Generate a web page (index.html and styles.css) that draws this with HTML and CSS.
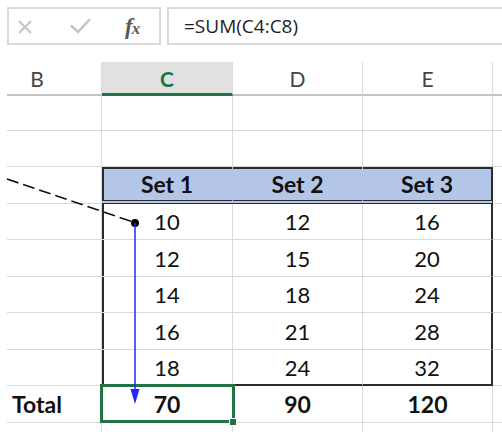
FILE: index.html
```html
<!DOCTYPE html>
<html>
<head>
<meta charset="utf-8">
<link rel="stylesheet" href="styles.css">
</head>
<body>
<div class="formula-bar">
  <div class="fx-box">
    <svg class="icon cancel" width="16" height="16" viewBox="0 0 16 16"><path d="M2 2 L14 14 M14 2 L2 14" stroke="#c3c3c3" stroke-width="2" fill="none"/></svg>
    <svg class="icon enter" width="21" height="16" viewBox="0 0 21 16"><path d="M1 7.5 L8 14 L20 1" stroke="#c3c3c3" stroke-width="2.4" fill="none"/></svg>
    <span class="fx">f<span class="x">x</span></span>
  </div>
  <div class="formula-input">=SUM(C4:C8)</div>
</div>

<div class="sheet">
  <div class="cell head b-head">B</div>
  <div class="cell head active">C</div>
  <div class="cell head">D</div>
  <div class="cell head">E</div>
  <div class="cell head edge"></div>

  <div class="cell"></div><div class="cell"></div><div class="cell"></div><div class="cell"></div><div class="cell edge"></div>
  <div class="cell"></div><div class="cell"></div><div class="cell"></div><div class="cell"></div><div class="cell edge"></div>

  <div class="cell"></div>
  <div class="cell th first">Set 1</div>
  <div class="cell th">Set 2</div>
  <div class="cell th last-col">Set 3</div>
  <div class="cell edge"></div>

  <div class="cell"></div><div class="cell td first">10</div><div class="cell td">12</div><div class="cell td last-col">16</div><div class="cell edge"></div>
  <div class="cell"></div><div class="cell td first">12</div><div class="cell td">15</div><div class="cell td last-col">20</div><div class="cell edge"></div>
  <div class="cell"></div><div class="cell td first">14</div><div class="cell td">18</div><div class="cell td last-col">24</div><div class="cell edge"></div>
  <div class="cell"></div><div class="cell td first">16</div><div class="cell td">21</div><div class="cell td last-col">28</div><div class="cell edge"></div>
  <div class="cell"></div><div class="cell td first last-row">18</div><div class="cell td last-row">24</div><div class="cell td last-col last-row">32</div><div class="cell edge"></div>

  <div class="cell label">Total</div>
  <div class="cell total sel">70</div>
  <div class="cell total">90</div>
  <div class="cell total">120</div>
  <div class="cell edge"></div>

  <div class="cell"></div><div class="cell"></div><div class="cell"></div><div class="cell"></div><div class="cell edge"></div>
</div>

<svg class="annot" width="502" height="432" viewBox="0 0 502 432">
  <path d="M7 179 L133 222" stroke="#111" stroke-width="1.6" stroke-dasharray="12 5" fill="none"/>
  <circle cx="135" cy="223" r="4" fill="#000"/>
  <path d="M135 223 V392" stroke="#2323ff" stroke-width="1.5" fill="none"/>
  <polygon points="130.5,389 139.5,389 135,404" fill="#2323ff"/>
</svg>
</body>
</html>
```

FILE: styles.css
```css
html, body {
  margin: 0;
  padding: 0;
}
body {
  width: 502px;
  height: 432px;
  overflow: hidden;
  background: #ffffff;
  position: relative;
  font-family: Lato, "Liberation Sans", sans-serif;
}

.formula-bar {
  display: flex;
  gap: 6px;
  margin: 7px 0 0 7px;
  height: 38px;
}

.fx-box {
  width: 154px;
  box-sizing: border-box;
  border: 2px solid #dadada;
  display: flex;
  align-items: center;
  padding-left: 8px;
}

.icon {
  display: block;
  flex: none;
}
.cancel {
  margin-top: 1px;
}
.enter {
  margin-left: 37px;
  margin-top: -1px;
}
.fx {
  margin-left: 34px;
  font-family: "Liberation Serif", serif;
  font-style: italic;
  font-weight: bold;
  font-size: 23px;
  color: #5a5a5a;
  line-height: 1;
  letter-spacing: -1px;
}
.fx .x {
  font-size: 17px;
}

.formula-input {
  flex: 1;
  box-sizing: border-box;
  border: 2px solid #dadada;
  border-right: none;
  display: flex;
  align-items: center;
  padding-left: 15px;
  font-family: "Open Sans", "Noto Sans", sans-serif;
  font-size: 19px;
  color: #1e1e1e;
}

.sheet {
  margin: 17px 0 0 7px;
  display: grid;
  grid-template-columns: 95px 131px 130px 130px 1fr;
  grid-template-rows: 34px 35px 36px 37px 36px 37px 36px 37px 36px 37px 20px;
}

.cell {
  box-sizing: border-box;
  border-right: 1px solid #d9d9d9;
  border-bottom: 1px solid #d9d9d9;
  display: flex;
  align-items: center;
  justify-content: center;
  font-size: 22px;
  color: #111111;
}
.cell.edge {
  border-right: none;
}

.head {
  font-size: 21px;
  color: #444444;
  border-bottom: 2px solid #c4c4c4;
  border-right-color: #dcdcdc;
  padding-top: 1px;
}
.b-head {
  padding-right: 34px;
}
.head.active {
  background: #e1e1e1;
  color: #217346;
  font-weight: bold;
  border-bottom: 3px solid #217346;
}

.th {
  background: #b4c6e7;
  font-weight: bold;
  font-size: 23px;
  box-shadow: inset 0 2px 0 #2b2b2b;
  border-bottom: 4px double #2b2b2b;
  border-right-color: #b4c6e7;
  padding-top: 1px;
}
.th.first {
  box-shadow: inset 2px 2px 0 #2b2b2b;
}
.td.first {
  box-shadow: inset 2px 0 0 #2b2b2b;
}
.last-col {
  border-right: 2px solid #2b2b2b;
}
.th.last-col {
  border-right: 2px solid #2b2b2b;
}
.last-row {
  border-bottom: 2px solid #2b2b2b;
}

.label {
  justify-content: flex-start;
  padding-left: 5px;
  font-weight: bold;
  font-size: 23px;
}
.total {
  font-weight: bold;
  font-size: 23px;
}

.sel {
  position: relative;
}
.sel::after {
  content: "";
  position: absolute;
  left: -2px;
  top: -2px;
  right: -3px;
  bottom: -1px;
  border: 3px solid #217346;
}
.sel::before {
  content: "";
  position: absolute;
  right: -5px;
  bottom: -4px;
  width: 6px;
  height: 6px;
  background: #217346;
  border: 1px solid #ffffff;
  z-index: 2;
}

.annot {
  position: absolute;
  left: 0;
  top: 0;
  pointer-events: none;
  z-index: 5;
}
```
